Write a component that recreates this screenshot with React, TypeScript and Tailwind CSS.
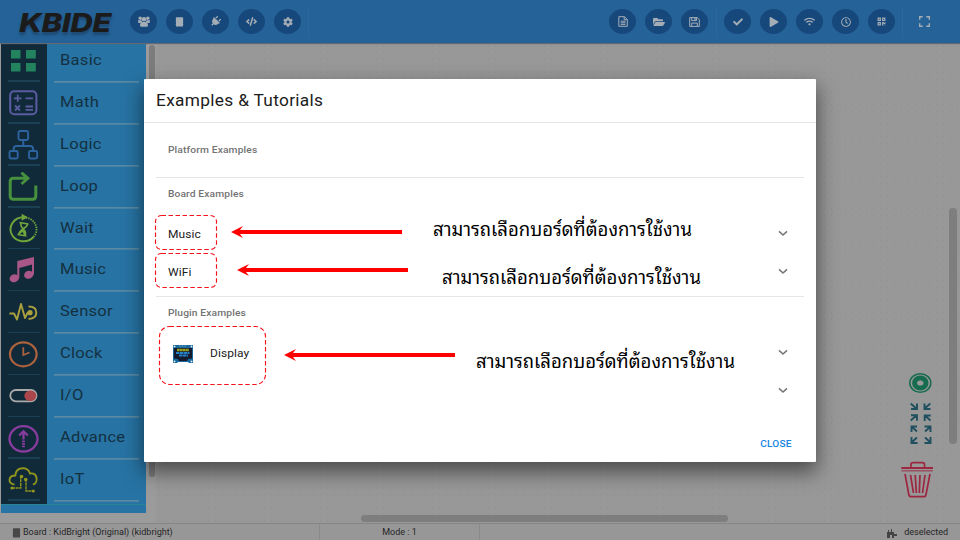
import React from "react";
import { FaPlug, FaCode, FaCog, FaFolderOpen, FaCheck, FaPlay, FaWifi, FaRegClock, FaQrcode } from "react-icons/fa";

const Chip = () => (
  <svg className="h-[10px] w-[9px]" viewBox="0 0 9 10">
    <path d="M0 1.5h9M0 3.5h9M0 5.5h9M0 7.5h9" stroke="currentColor" strokeWidth=".6" opacity=".4" />
    <rect x="1" y=".3" width="7" height="9.2" rx=".5" fill="currentColor" />
  </svg>
);

const TeamIcon = () => (
  <svg className="h-[11px] w-3" viewBox="0 0 12 11" fill="currentColor">
    <circle cx="2.2" cy="2.2" r="1.7" />
    <circle cx="9.8" cy="2.2" r="1.7" />
    <circle cx="6" cy="3.3" r="2.3" />
    <path d="M0 4.3h3.5L4 6 2 7H.4Q0 6 0 4.3zM12 4.3H8.5L8 6l2 1h1.6q.4-1 .4-2.7zM2 10q0-4 2.3-4h3.4Q10 6 10 10l-1 .8H3z" />
  </svg>
);

const DocIcon = () => (
  <svg className="h-[11px] w-[10px]" viewBox="0 0 10 11" fill="none" stroke="currentColor">
    <path d="M.8.7h5.7l2.8 2.8v6.8H.8zM6.2.7v3h3M2.7 5.2h4.8M2.7 6.8h4.8M2.7 8.4h4.8" />
  </svg>
);

const SaveIcon = () => (
  <svg className="h-[10px] w-[11px]" viewBox="0 0 11 10" fill="none" stroke="currentColor">
    <path d="M.7.6h7.5l2.1 2v6.8H.7zM2.7 9.2V6.1h5.6v3.1M2.7.8v2.8h4.8V.8" />
    <path d="M6 .8v2.5" strokeWidth="1.3" />
  </svg>
);

const leftTools = [<TeamIcon />, <Chip />, <FaPlug size={11} className="rotate-45" />, <FaCode size={11} />, <FaCog size={10} />];
const fileTools = [<DocIcon />, <FaFolderOpen size={12} />, <SaveIcon />];
const runTools = [<FaCheck size={10} />, <FaPlay size={10} />, <FaWifi size={11} />, <FaRegClock size={10} />, <FaQrcode size={9} />];

function ToolGroup({ items }: { items: React.ReactNode[] }) {
  return (
    <div className="flex gap-[9px]">
      {items.map((icon, i) => (
        <div key={i} className="flex h-[25px] w-[27px] items-center justify-center rounded-[50%] bg-[#17487c] text-[#a4adb5]">
          {icon}
        </div>
      ))}
    </div>
  );
}

const Divider = () => <div className="h-8 w-px bg-[#2c689a]" />;

const categories: { name: string; icon: React.ReactNode }[] = [
  { name: "Basic", icon: <path d="M3 4h9.5v8.5H3zM18 4h9.8v8.5H18zM3 17h9.5v8.5H3zM18 17h9.8v8.5H18z" fill="#23835f" /> },
  {
    name: "Math",
    icon: (
      <g fill="none" stroke="#5b5ca0">
        <rect x="2.2" y="3.2" width="26.2" height="23" rx="4" strokeWidth="2" />
        <path d="M6 10.3h7.5M9.7 6.8v7M17.5 10.3H25M7 17.5l5 5M12 17.5l-5 5M17.5 18.5H25M17.5 21.8H25" strokeWidth="1.8" />
      </g>
    ),
  },
  {
    name: "Logic",
    icon: (
      <g fill="none" stroke="#2d649f" strokeWidth="1.9">
        <rect x="10.5" y="1" width="9.6" height="9" rx="1.5" />
        <rect x="1.5" y="21" width="8.2" height="7.5" rx="1.5" />
        <rect x="21" y="21" width="8.2" height="7.5" rx="1.5" />
        <path d="M15.3 10v6M5.6 21v-2q0-3 3-3h13.5q3 0 3 3v2" />
      </g>
    ),
  },
  {
    name: "Loop",
    icon: (
      <path d="M27.8 13.5V24q0 3.2-3.2 3.2H5.4q-3.2 0-3.2-3.2V9.5q0-3.2 3.2-3.2H19M13.5.7l6.3 5.6-6.3 5.7" fill="none" stroke="#47913e" strokeWidth="3" />
    ),
  },
  {
    name: "Wait",
    icon: (
      <g fill="none" stroke="#70a53c" strokeWidth="1.9">
        <path d="M15.5 3.3A13 12 0 1 0 25.5 23" />
        <path d="M15.5 3.3A13 12 0 0 1 25.5 23" strokeDasharray="1.4 1" />
        <path d="M14.5 1.2v4l3.500-2zM11.500 8.500l9 1.500M9.500 20.500l9 1.500M13 9c-2 6 7 6 4 12.500M19.800 10c-2 6-8 4-9 10.500M11 19.500l4-3 2 5" strokeWidth="1.7" />
      </g>
    ),
  },
  {
    name: "Music",
    icon: (
      <g fill="#a95788">
        <ellipse cx="6.3" cy="23.3" rx="4.8" ry="3.9" transform="rotate(-18 6.3 23.3)" />
        <ellipse cx="20.8" cy="19.800" rx="4.8" ry="3.9" transform="rotate(-18 20.8 19.8)" />
        <path fillRule="evenodd" d="M9.300 6 26 2v17.500h-2V9.500L11.300 13v10h-2z" />
      </g>
    ),
  },
  {
    name: "Sensor",
    icon: (
      <g fill="none" stroke="#aaa13e" strokeWidth="1.9" strokeLinejoin="round">
        <path d="M1.500 16.500H6l3 6 4-15.500 4 14 2.500-5h3M20.500 9.500q7.800 0 7.800 6t-7.800 6.500" />
        <circle cx="22" cy="15.7" r="2.6" fill="#aaa13e" stroke="none" />
      </g>
    ),
  },
  {
    name: "Clock",
    icon: (
      <g fill="none" stroke="#ac623c" strokeWidth="2.2">
        <ellipse cx="15.3" cy="15.3" rx="13.3" ry="12" />
        <path d="M15.300 8.300v7.700l6.200-2.500" strokeWidth="1.8" />
      </g>
    ),
  },
  {
    name: "I/O",
    icon: (
      <>
        <rect x="2.3" y="9" width="26.2" height="11.3" rx="5.6" fill="none" stroke="#aaa" strokeWidth="1.8" />
        <ellipse cx="22.3" cy="14.7" rx="6" ry="5.2" fill="#ab474b" />
      </>
    ),
  },
  {
    name: "Advance",
    icon: (
      <g fill="none" stroke="#883d9e" strokeWidth="2.3">
        <ellipse cx="15.5" cy="15.8" rx="14" ry="12.7" />
        <path d="M11.200 12.500l4.300-4.200 4.300 4.200M15.500 8.500v8" />
        <path d="M15.500 17.500v7" strokeWidth="2.8" strokeDasharray="1.7 .8" />
      </g>
    ),
  },
  {
    name: "IoT",
    icon: (
      <g fill="none" stroke="#91961d" strokeWidth="1.9">
        <path d="M6.500 19.500C-.5 19 0 10.500 7.300 10.500 8 1.500 20 1 22 8.500c8-1 8.500 9.500 3 11" />
        <path d="M4 23h8.700v-12M18 14v12h7" strokeWidth="1.4" strokeDasharray="3 .6" />
        <g fill="#91961d" stroke="none">
          <circle cx="4" cy="23" r="1.6" />
          <circle cx="25.3" cy="26" r="1.6" />
          <circle cx="13.5" cy="11.5" r="1.8" />
          <circle cx="17.7" cy="14.5" r="1.8" />
        </g>
      </g>
    ),
  },
];

function Sidebar() {
  return (
    <div className="h-[470px] w-[145px] overflow-hidden bg-[#2773a3]">
      <div className="-mt-[3px] border-b border-[#278396]">
        {categories.map((c) => (
          <div key={c.name} className="flex h-[41.9px] text-[#14303f]">
            <div className="flex w-[46px] flex-col items-center justify-between bg-[#102a3a]">
              <svg className="-ml-px mt-[6px] h-[30px] w-[31px]" viewBox="0 0 31 30">{c.icon}</svg>
              <div className="h-[1.500px] w-8 bg-[#1b4053]" />
            </div>
            <div className="flex w-[99px] flex-col justify-between pl-[7px]">
              <span className="mt-[10px] w-max origin-left scale-x-[1.1] pl-[5.5px] text-[15px] leading-[20px] tracking-[0.25px]">{c.name}</span>
              <div className="h-px w-[85px] translate-y-[0.4px] bg-[#7c9aa5]" />
            </div>
          </div>
        ))}
        <div className="h-[3px] w-[46px] bg-[#102a3a]" />
      </div>
    </div>
  );
}

function CanvasTools() {
  return (
    <svg className="absolute left-[900px] top-[370px] h-[130px] w-[36px]" viewBox="0 0 36 130" fill="none">
      <g stroke="#176c50">
        <ellipse cx="20.3" cy="13" rx="10.5" ry="9.3" strokeWidth="1.5" />
        <ellipse cx="20.3" cy="13" rx="5.7" ry="5" strokeWidth="5" />
        <ellipse cx="20.300" cy="13" rx="2.700" ry="2.300" fill="#999" stroke="none" />
      </g>
      <g stroke="#20505f" strokeWidth="1.9">
        <path d="M10.700 33.500 16 38.300M11 39h6v-5.500M30.300 33.500 25 38.300M30.500 39h-6v-5.500" />
        <path d="M10.700 50.500 16 45.700M11 45.200h6v5.500M30.500 50.500 25.200 45.700M24.700 51V45.500h6" />
        <path d="M17 61.500 11.500 56.500M11.500 62V56.500h5.500M25 61.500 30.500 56.500M30.500 62V56.500h-6" />
        <path d="M17 67.500 11.500 72.500M11.500 67V73h6M25 67.500 30.500 72.500M30.500 67V73h-6" />
      </g>
      <g stroke="#9d2740" strokeWidth="1.7">
        <path d="M1.300 98h31.700" strokeWidth="2" />
        <path d="M1.500 100.800h31.300" strokeWidth="1.2" opacity=".8" />
        <path d="M11 97v-2.300q0-2 2-2h9.500q2 0 2 2V97M5 104l3.800 20.500q.4 2.200 2.400 2.200h12.400q2 0 2.400-2.200l4-20.500M10.500 105l3 18M15.200 105l1.200 18M20 105 19.300 123M25 105 22.500 123" />
      </g>
    </svg>
  );
}

const Chevron = () => (
  <svg className="h-[7px] w-[10px] text-[#777]" viewBox="0 0 10 7">
    <path d="M1 1.400 5 5l4-3.600" fill="none" stroke="currentColor" strokeWidth="1.6" />
  </svg>
);

function Heading({ children }: { children: string }) {
  return <div className="w-max origin-left scale-x-[1.08] pl-[11px] text-[9.5px] font-medium leading-4 tracking-[0.12px] text-[#737373]">{children}</div>;
}

function Row({ label, children }: { label?: string; children?: React.ReactNode }) {
  return (
    <div className="flex h-[38px] items-center justify-between pl-3 pr-4">
      <div className="mt-[4px] flex items-center">
        {children}
        <span className="origin-left scale-x-[1.09] text-[11px] tracking-[0.08px] text-[#1c1c1c]">{label}</span>
      </div>
      <Chevron />
    </div>
  );
}

const DisplayIcon = () => (
  <svg className="ml-[5px] mr-[17px] h-[18px] w-5" viewBox="0 0 20 18">
    <path d="M0 0h20v18h-4l-1-1H5l-1 1H0z" fill="#17669c" />
    <path d="M1 3h18v10.500l-4 .5-1 2H6l-1-2-4-.5z" fill="#151b2d" />
    <path d="M4 5h12" stroke="#9aa21c" strokeWidth="2.4" strokeDasharray="2.500 .3" />
    <path d="M3 8h13.500M6 10.500h9" stroke="#2780ca" strokeWidth="1.9" strokeDasharray="3.500 .5" />
    <g fill="#d9edf5"><circle cx="1.5" cy="1.5" r="1" /><circle cx="18.5" cy="1.5" r="1" /><circle cx="1.5" cy="16.5" r="1" /><circle cx="18.5" cy="16.5" r="1" /></g>
    <path d="M6 1h8" stroke="#8ab9d0" strokeDasharray=".8 .8" />
  </svg>
);

function Annotations() {
  const note = "สามารถเลือกบอร์ดที่ต้องการใช้งาน";
  const cls = "absolute origin-left scale-x-[0.976] whitespace-nowrap font-['TH_Sarabun_New','Noto_Sans_Thai_Looped','Loma','Garuda','Norasi','Waree','FreeSerif','Noto_Serif_Thai',sans-serif] text-[19px] leading-[30px] text-black";
  return (
    <div className="absolute inset-0">
      <svg className="absolute inset-0 h-full w-full" viewBox="0 0 960 540">
        <g fill="none" stroke="#f5141c" strokeWidth="1.15" strokeDasharray="4.5 2.5">
          <rect x="155.5" y="215.5" width="61" height="34" rx="6" />
          <rect x="155.5" y="253.5" width="61" height="34" rx="6" />
          <rect x="159.5" y="326.5" width="106" height="58" rx="10" />
        </g>
        <g fill="#f00">
          <path d="M231 232l12-6-3 4h162v4H240l3 4z" />
          <path d="M237 270l12-6-3 4h162v4H246l3 4z" />
          <path d="M284 355l12-6-3 4h162v4H293l3 4z" />
        </g>
      </svg>
      <span className={`${cls} left-[433px] top-[213px]`}>{note}</span>
      <span className={`${cls} left-[442px] top-[261px]`}>{note}</span>
      <span className={`${cls} left-[476px] top-[345px]`}>{note}</span>
    </div>
  );
}

function ExamplesDialog() {
  return (
    <div className="absolute left-[144px] top-[79px] flex h-[383px] w-[672px] flex-col rounded-[1px] bg-white shadow-[0_9px_20px_1px_rgba(0,0,0,0.5)]">
      <div className="flex h-[44px] items-center border-b border-[#e6e6e6] pl-3">
        <h1 className="origin-left scale-x-[1.08] text-[16px] tracking-[0.3px] text-[#1c1c1c]">Examples &amp; Tutorials</h1>
      </div>
      <div className="flex flex-1 flex-col px-3">
        <div className="h-[55px] border-b border-[#e6e6e6] pt-[19px]"><Heading>Platform Examples</Heading></div>
        <div className="h-[119px] border-b border-[#e6e6e6] pt-[8px]">
          <Heading>Board Examples</Heading>
          <div className="pt-[12px]"><Row label="Music" /><Row label="WiFi" /></div>
        </div>
        <div className="pt-[8px]">
          <Heading>Plugin Examples</Heading>
          <div className="pt-[12px]"><Row label="Display"><DisplayIcon /></Row><Row /></div>
        </div>
      </div>
      <div className="flex justify-end pb-[10px] pr-6">
        <button className="origin-right scale-x-[1.06] text-[9.5px] font-medium leading-4 tracking-[0.2px] text-[#1685df]">CLOSE</button>
      </div>
    </div>
  );
}

export default function App() {
  return (
    <div className="relative flex h-[540px] w-[960px] flex-col overflow-hidden bg-[#999] font-[Roboto,sans-serif]">
      <header className="z-10 flex h-[43px] shrink-0 items-center bg-[#246297] shadow-[0_1px_1px_#626970]">
        <div className="ml-[19px] w-[111px]">
          <div className="mt-[3px] w-max origin-left scale-x-[1.2] font-[Inter,sans-serif] text-[26px] font-extrabold italic leading-[40px] tracking-[-0.4px] text-[#1b1b1b] [text-shadow:0_3px_2px_rgba(25,50,80,0.5)]">KBIDE</div>
        </div>
        <ToolGroup items={leftTools} />
        <div className="ml-[7px]"><Divider /></div>
        <div className="ml-auto flex items-center">
          <ToolGroup items={fileTools} />
          <div className="mx-[7.5px]"><Divider /></div>
          <ToolGroup items={runTools} />
          <div className="ml-[7px]"><Divider /></div>
          <svg className="ml-[16px] mr-[30px] h-[11px] w-[11px]" viewBox="0 0 11 11">
            <path d="M.7 3.700v-3h3M7.300.7h3v3M10.300 7.300v3h-3M3.700 10.300h-3v-3" fill="none" stroke="#a4adb5" strokeWidth="1.4" />
          </svg>
        </div>
      </header>
      <main className="flex h-[480px] shrink-0">
        <div className="flex w-[156px] bg-[#9b9b9b] pl-px">
          <Sidebar />
          <div className="ml-[3px] mt-[2px] h-[432px] w-[6px] rounded-full bg-[#7c7c7c]" />
        </div>
        <div className="flex flex-1 flex-col justify-between bg-[#989898] bg-[radial-gradient(circle,#8f8f8f_0.6px,transparent_0.8px)] bg-[size:7px_6.5px]">
          <div className="ml-auto mr-[3px] mt-[165px] h-[236px] w-[8px] rounded-full bg-[#7e7e7e]" />
          <div className="mb-[1px] ml-[205px] h-[7px] w-[367px] rounded-full bg-[#7e7e7e]" />
        </div>
      </main>
      <footer className="flex h-[17px] items-center border-t border-[#858585] bg-[#979797] text-[9px] text-[#252525]">
        <div className="flex h-full w-[320px] items-center gap-[2px] border-r border-[#8a8a8a] pl-3 pt-[2px]">
          <span className="text-[#484848]"><Chip /></span>
          <span>Board : KidBright (Original) (kidbright)</span>
        </div>
        <div className="flex h-full w-[160px] items-center justify-center border-r border-[#8a8a8a] pt-[2px]"><span>Mode : 1</span></div>
        <div className="ml-auto flex items-center gap-[7px] pr-3 pt-[2px]">
          <svg className="h-[9px] w-[10px]" viewBox="0 0 10 9" fill="#444"><path d="M0 3h1V1h1v2h2V0h1v3h2v2h3v2H7v2H5V6H3v3H0z" /></svg>
          <span>deselected</span>
        </div>
      </footer>
      <CanvasTools />
      <ExamplesDialog />
      <Annotations />
    </div>
  );
}
